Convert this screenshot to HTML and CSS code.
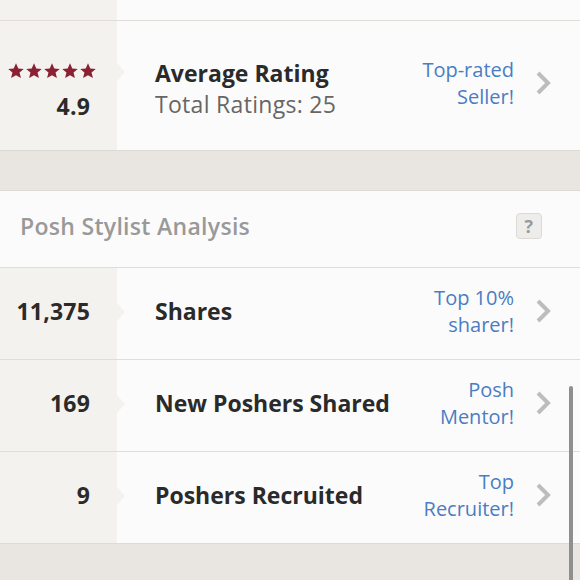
FILE: index.html
```html
<!DOCTYPE html>
<html lang="en">
<head>
    <meta charset="UTF-8">
    <title>Closet Insights</title>
    <link rel="stylesheet" href="styles.css">
</head>
<body>
    <div class="card">
        <div class="row row-stub">
            <div class="cell-left"></div>
            <div class="cell-right"></div>
        </div>
        <div class="row row-rating">
            <div class="cell-left notch notch-high">
                <div class="stars">
                    <svg viewBox="0 0 14 14"><polygon points="7,0.3 9,4.8 13.8,5.2 10.1,8.4 11.3,13.2 7,10.7 2.7,13.2 3.9,8.4 0.2,5.2 5,4.8"/></svg>
                    <svg viewBox="0 0 14 14"><polygon points="7,0.3 9,4.8 13.8,5.2 10.1,8.4 11.3,13.2 7,10.7 2.7,13.2 3.9,8.4 0.2,5.2 5,4.8"/></svg>
                    <svg viewBox="0 0 14 14"><polygon points="7,0.3 9,4.8 13.8,5.2 10.1,8.4 11.3,13.2 7,10.7 2.7,13.2 3.9,8.4 0.2,5.2 5,4.8"/></svg>
                    <svg viewBox="0 0 14 14"><polygon points="7,0.3 9,4.8 13.8,5.2 10.1,8.4 11.3,13.2 7,10.7 2.7,13.2 3.9,8.4 0.2,5.2 5,4.8"/></svg>
                    <svg viewBox="0 0 14 14"><polygon points="7,0.3 9,4.8 13.8,5.2 10.1,8.4 11.3,13.2 7,10.7 2.7,13.2 3.9,8.4 0.2,5.2 5,4.8"/></svg>
                </div>
                <div class="stat">4.9</div>
            </div>
            <div class="cell-right">
                <div class="label">
                    <div class="title">Average Rating</div>
                    <div class="sub">Total Ratings: 25</div>
                </div>
                <div class="badge">Top-rated<br>Seller!</div>
                <svg class="chevron" viewBox="0 0 16 26"><polyline points="3,3 13,13 3,23"/></svg>
            </div>
        </div>
    </div>

    <div class="card">
        <div class="card-head">
            <span>Posh Stylist Analysis</span>
            <span class="help">?</span>
        </div>
        <div class="row">
            <div class="cell-left notch"><div class="stat">11,375</div></div>
            <div class="cell-right">
                <div class="title">Shares</div>
                <div class="badge">Top 10%<br>sharer!</div>
                <svg class="chevron" viewBox="0 0 16 26"><polyline points="3,3 13,13 3,23"/></svg>
            </div>
        </div>
        <div class="row">
            <div class="cell-left notch"><div class="stat">169</div></div>
            <div class="cell-right">
                <div class="title">New Poshers Shared</div>
                <div class="badge">Posh<br>Mentor!</div>
                <svg class="chevron" viewBox="0 0 16 26"><polyline points="3,3 13,13 3,23"/></svg>
            </div>
        </div>
        <div class="row">
            <div class="cell-left notch"><div class="stat">9</div></div>
            <div class="cell-right">
                <div class="title">Poshers Recruited</div>
                <div class="badge">Top<br>Recruiter!</div>
                <svg class="chevron" viewBox="0 0 16 26"><polyline points="3,3 13,13 3,23"/></svg>
            </div>
        </div>
    </div>

    <div class="scrollbar"></div>
</body>
</html>
```

FILE: styles.css
```css
body {
    margin: 0;
    background-color: #e9e6e2;
    font-family: "Open Sans", Lato, sans-serif;
    color: #2a2a2a;
    overflow: hidden;
}
.card {
    background-color: #fcfbfb;
    border-bottom: 1px solid #dedbd7;
    margin-bottom: 39px;
}
.card + .card {
    border-top: 1px solid #dedbd7;
}
.row {
    display: grid;
    grid-template-columns: 117px 1fr;
    height: 91px;
    border-bottom: 1px solid #e0ddd9;
}
.row:last-child {
    border-bottom: none;
}
.row-stub {
    height: 20px;
}
.row-rating {
    height: 129px;
}
.cell-left {
    background-color: #f4f2ef;
    display: flex;
    flex-direction: column;
    justify-content: center;
    align-items: flex-end;
    padding-right: 27px;
    padding-bottom: 5px;
    position: relative;
}
.row-rating .cell-left {
    padding-top: 12px;
    padding-bottom: 0;
}
.notch::after {
    content: "";
    position: absolute;
    left: 100%;
    top: 50%;
    margin-top: -11px;
    border-top: 9px solid transparent;
    border-bottom: 9px solid transparent;
    border-left: 8px solid #f4f2ef;
}
.notch-high::after {
    top: 51px;
    margin-top: -9px;
}
.stars {
    display: flex;
    gap: 2px;
    margin-right: -6px;
    margin-bottom: 12px;
}
.stars svg {
    width: 16px;
    height: 16px;
    fill: #8a2233;
}
.stat {
    font-size: 23px;
    font-weight: 700;
    letter-spacing: 0.2px;
    line-height: 30px;
}
.cell-right {
    display: flex;
    align-items: center;
    padding-left: 38px;
    padding-right: 29px;
    padding-bottom: 5px;
}
.label {
    flex: 1;
    margin-top: 12px;
}
.title {
    flex: 1;
    font-size: 23px;
    font-weight: 700;
    line-height: 30px;
}
.sub {
    font-size: 23px;
    color: #666;
    line-height: 32px;
    letter-spacing: 0.3px;
}
.badge {
    text-align: right;
    color: #4a7dc3;
    font-size: 20px;
    line-height: 27px;
}
.chevron {
    width: 16px;
    height: 26px;
    margin-left: 21px;
    fill: none;
    stroke: #bdbdbd;
    stroke-width: 4;
}
.card-head {
    height: 77px;
    display: flex;
    align-items: center;
    justify-content: space-between;
    padding: 0 38px 6px 20px;
    box-sizing: border-box;
    font-size: 23px;
    font-weight: 600;
    letter-spacing: 0.3px;
    color: #999;
    border-bottom: 1px solid #e0ddd9;
}
.help {
    width: 26px;
    height: 26px;
    box-sizing: border-box;
    border: 1px solid #dcdad7;
    border-radius: 4px;
    background-color: #efedeb;
    color: #9a9a9a;
    font-size: 18px;
    font-weight: 700;
    display: flex;
    align-items: center;
    justify-content: center;
}
.scrollbar {
    position: absolute;
    left: 569px;
    top: 386px;
    width: 4px;
    height: 200px;
    border-radius: 2px;
    background-color: #8f8f8f;
}
```
